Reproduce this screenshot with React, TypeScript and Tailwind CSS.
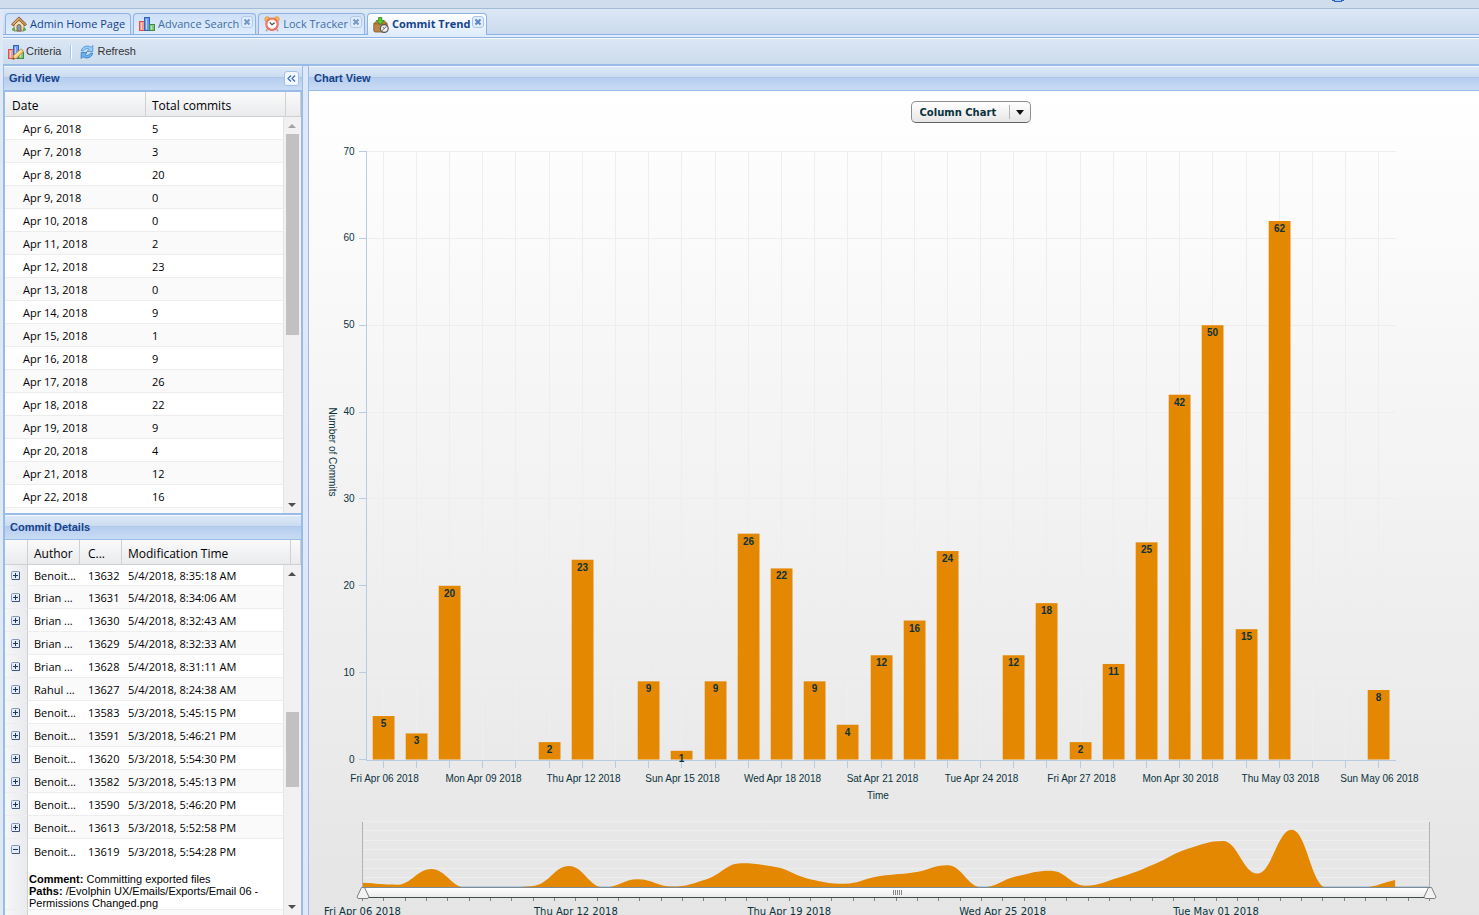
import { useState, type ReactNode } from "react";

const commits = [
  5, 3, 20, 0, 0, 2, 23, 0, 9, 1, 9, 26, 22, 9, 4, 12, 16, 24, 0, 12, 18, 2, 11, 25, 42, 50, 15, 62, 0, 0, 8,
];

const gridRows = commits.slice(0, 17).map((total, i) => ({ date: `Apr ${6 + i}, 2018`, total }));

const details = [
  ["Benoit...", "13632", "5/4/2018, 8:35:18 AM"],
  ["Brian ...", "13631", "5/4/2018, 8:34:06 AM"],
  ["Brian ...", "13630", "5/4/2018, 8:32:43 AM"],
  ["Brian ...", "13629", "5/4/2018, 8:32:33 AM"],
  ["Brian ...", "13628", "5/4/2018, 8:31:11 AM"],
  ["Rahul ...", "13627", "5/4/2018, 8:24:38 AM"],
  ["Benoit...", "13583", "5/3/2018, 5:45:15 PM"],
  ["Benoit...", "13591", "5/3/2018, 5:46:21 PM"],
  ["Benoit...", "13620", "5/3/2018, 5:54:30 PM"],
  ["Benoit...", "13582", "5/3/2018, 5:45:13 PM"],
  ["Benoit...", "13590", "5/3/2018, 5:46:20 PM"],
  ["Benoit...", "13613", "5/3/2018, 5:52:58 PM"],
];

const dayLabels = [
  "Fri Apr 06 2018",
  "Mon Apr 09 2018",
  "Thu Apr 12 2018",
  "Sun Apr 15 2018",
  "Wed Apr 18 2018",
  "Sat Apr 21 2018",
  "Tue Apr 24 2018",
  "Fri Apr 27 2018",
  "Mon Apr 30 2018",
  "Thu May 03 2018",
  "Sun May 06 2018",
];

const rangeLabels = ["Fri Apr 06 2018", "Thu Apr 12 2018", "Thu Apr 19 2018", "Wed Apr 25 2018", "Tue May 01 2018"];

/* ---------- icons ---------- */

function HomeIcon() {
  return (
    <svg width="16" height="16" viewBox="0 0 16 16" aria-hidden="true" className="shrink-0">
      <path d="M3 8v7h10V8L8 3z" fill="#f3dfb4" stroke="#8b7346" strokeWidth=".8" />
      <path d="M6 15v-4.500a2 2 0 0 1 4 0V15z" fill="#8a9bb0" stroke="#6b5a3c" strokeWidth=".8" />
      <path d="M8 .9 15.500 8.200l-1.500 1.600L8 4.200 2 9.800.5 8.200z" fill="#c8955a" stroke="#8a5527" strokeWidth=".9" />
      <path d="M8 2.300 2 8.200" stroke="#ecc893" strokeWidth=".8" />
      <path d="M1 14.500c0-2 1-3 2.200-2.500.9.400 1.100 1.500 1 2.800zM15 14.500c0-2-1-3-2.200-2.500-.9.400-1.100 1.500-1 2.800z" fill="#5aa544" />
    </svg>
  );
}

function Bars() {
  return (
    <>
      <rect x=".5" y="5.500" width="5" height="9" fill="#f79a94" stroke="#e0504a" />
      <path d="M2.500 7v6.500" stroke="#ffd2ce" />
      <rect x="5.500" y="1.500" width="5" height="13" fill="#6a9def" stroke="#2f62b8" />
      <path d="M7.500 3v10.500" stroke="#b4d0fb" />
      <rect x="10.500" y="8.500" width="5" height="6" fill="#86c67f" stroke="#3f8c42" />
      <path d="M12.500 10v3.500" stroke="#c0e8ba" />
    </>
  );
}

function ChartIcon() {
  return (
    <svg width="16" height="16" viewBox="0 0 16 16" aria-hidden="true" className="shrink-0">
      <Bars />
    </svg>
  );
}

function ChartEditIcon() {
  return (
    <svg width="16" height="16" viewBox="0 0 16 16" aria-hidden="true" className="shrink-0">
      <Bars />
      <path d="m4.700 15.400.8-3.800L12.300 5.400c1.200-.9 3.600 1.400 2.700 2.500L8.300 14.400z" fill="#f6cf7c" stroke="#c08a34" strokeWidth=".9" />
      <path d="m6.800 12.200 6.200-5.700" stroke="#fff3c8" strokeWidth="1" />
      <path d="m4.700 15.400.5-2.200 1.600 1.500z" fill="#5b3d14" />
    </svg>
  );
}

function ClockIcon() {
  return (
    <svg width="16" height="16" viewBox="0 0 16 16" aria-hidden="true" className="shrink-0">
      <path d="m3.500 13-1.500 2.300M12.500 13l1.500 2.300" stroke="#b9a7a2" strokeWidth="1.600" />
      <circle cx="3.300" cy="3.200" r="2.500" fill="#f8c05c" stroke="#e0902f" strokeWidth=".8" />
      <circle cx="12.700" cy="3.200" r="2.500" fill="#f8c05c" stroke="#e0902f" strokeWidth=".8" />
      <circle cx="8" cy="8.300" r="5.700" fill="#fbfbf8" stroke="#e8594b" strokeWidth="2" />
      <circle cx="8" cy="8.300" r="5.700" fill="none" stroke="#f59a8c" strokeWidth=".7" />
      <path d="m5.800 6.300 2.200 2.400 2.600-2" fill="none" stroke="#454545" strokeWidth="1.100" />
    </svg>
  );
}

function CommitIcon() {
  return (
    <svg width="16" height="16" viewBox="0 0 16 16" aria-hidden="true" className="shrink-0">
      <path d="m.8 6.500 3-2.300h8l2.400 2.300v6.300L10.500 15H1.800l-1-1z" fill="#b98446" stroke="#8a6130" strokeWidth=".9" />
      <path d="m1 6.700 8.500.5 4.500-.6M9.500 7.200V15" fill="none" stroke="#8a5c29" strokeWidth=".8" />
      <path d="M5.600.5h3.200v3h2.300L7.200 7.600 3.300 3.500h2.300z" fill="#5cc832" stroke="#2c8618" strokeWidth=".8" />
      <circle cx="11.300" cy="11.500" r="3.900" fill="#efefef" stroke="#555" strokeWidth="1.200" />
      <path d="m9 13.700 4.600-4.500M11.200 11.500 9.900 10" stroke="#5a5a5a" strokeWidth=".9" />
    </svg>
  );
}

function RefreshIcon() {
  return (
    <svg width="16" height="16" viewBox="0 0 16 16" aria-hidden="true" className="shrink-0">
      <path d="M2.200 6.800C3 2.800 8.300.5 12 3.300L13.800 1.500v6H7.900l2.200-2.200C8 4 5.700 4.600 4.500 6.900z" fill="#9bcdf8" stroke="#3f8bd2" strokeWidth=".8" />
      <path d="M13.800 9.200c-.8 4-6.100 6.300-9.800 3.500l-1.800 1.800v-6h5.900l-2.200 2.200c2.100 1.300 4.400.7 5.600-1.600z" fill="#6db2ee" stroke="#2f78c4" strokeWidth=".8" />
    </svg>
  );
}

function Expander({ open = false }: { open?: boolean }) {
  return (
    <button type="button" aria-label={open ? "Collapse row" : "Expand row"} className="block">
      <svg width="9" height="9" viewBox="0 0 9 9" aria-hidden="true">
        <rect x=".5" y=".5" width="8" height="8" rx="1" fill="#e4ebf5" stroke="#8297b5" />
        <path d="M8.500 1v7.500H1" fill="none" stroke="#3b5580" />
        <path d={open ? "M2 4.500h5" : "M2 4.500h5M4.500 2v5"} stroke="#1c3763" />
      </svg>
    </button>
  );
}

/* ---------- chrome ---------- */

function CloseButton({ label, strong }: { label: string; strong?: boolean }) {
  return (
    <button
      type="button"
      aria-label={label}
      className={`absolute top-[2px] right-[2px] flex size-[12px] items-center justify-center rounded-[3px] border border-[#a9c6ec] bg-[#e3eefb] ${strong ? "" : "opacity-80"}`}
    >
      <svg width="8" height="8" viewBox="0 0 8 8" aria-hidden="true">
        <path d="m1.500 1.500 5 5M6.500 1.500l-5 5" stroke="#5b86c0" strokeWidth="2" />
      </svg>
    </button>
  );
}

type TabProps = { icon: ReactNode; label: string; tone: string; closable?: boolean; active?: boolean };

function Tab({ icon, label, tone, closable, active }: TabProps) {
  return (
    <div
      className={`relative flex rounded-t-[4px] border border-b-0 border-[#8db2e3] pl-[5px] ${
        active ? "-mb-px h-[22px] bg-linear-to-b from-white to-[#deecfd]" : "h-[21px] bg-linear-to-b from-[#cfe0f7] to-[#deecfd]"
      } ${closable ? "pr-[16px]" : "pr-[5px]"}`}
    >
      <button type="button" role="tab" aria-selected={!!active} className={`flex items-center gap-[3px] whitespace-nowrap ${tone}`}>
        {icon}
        {label}
      </button>
      {closable && <CloseButton label={`Close ${label}`} strong={active} />}
    </div>
  );
}

function PanelHeader({ title, children }: { title: string; children?: ReactNode }) {
  return (
    <div className="flex h-[25px] shrink-0 items-center justify-between border-t border-b border-t-[#f4f8fd] border-b-[#99bbe8] bg-[linear-gradient(#dce8f6_0,#cbdcf1_10px,#aac3e6_10px,#b6cdef_11px,#c9dcf4_100%)] px-[5px]">
      <h2 className="text-[11px] font-bold text-[#15428b]">{title}</h2>
      {children}
    </div>
  );
}

function Scrollbar({ dimTop, children }: { dimTop?: boolean; children: ReactNode }) {
  return (
    <div className="absolute top-[25px] right-0 bottom-0 flex w-[18px] flex-col items-center border-l border-[#e4e4e4] bg-[#f1f1f1] pr-px">
      <svg width="16" height="17" viewBox="0 0 16 17" aria-hidden="true" className="shrink-0">
        <path d="M4 11h8L8 7z" fill={dimTop ? "#a3a3a3" : "#4d4d4d"} />
      </svg>
      <div className="flex w-[13px] flex-1 flex-col">{children}</div>
      <svg width="16" height="17" viewBox="0 0 16 17" aria-hidden="true" className="shrink-0">
        <path d="M4 7h8l-4 4z" fill="#4d4d4d" />
      </svg>
    </div>
  );
}

const th =
  "h-[25px] border-r border-b border-[#d0d0d0] bg-linear-to-b from-[#fafafa] to-[#e9ebed] pt-[4px] text-left text-[12px] leading-[16px] font-normal text-black";
const td = "border-b border-[#ededed] pt-[2px] leading-[16px] whitespace-nowrap";
const sideCell = "border-r border-[#d0d0d0] bg-linear-to-r from-[#f7f7f7] to-[#e8eaee] pl-[6px]";

function GridView() {
  return (
    <div className="relative h-[421px] shrink-0 overflow-hidden bg-white">
      <table className="w-full table-fixed border-separate border-spacing-0 font-['Open_Sans','Noto_Sans',sans-serif] text-[11px] text-black">
        <colgroup>
          <col className="w-[141px]" />
          <col />
          <col className="w-[15px]" />
        </colgroup>
        <thead>
          <tr>
            <th className={`${th} pl-[7px]`}>Date</th>
            <th className={`${th} pl-[6px]`}>Total commits</th>
            <th className={th} aria-label="Menu" />
          </tr>
        </thead>
        <tbody>
          {gridRows.map((row, i) => (
            <tr key={row.date} className={i % 2 ? "bg-[#fafafa]" : "bg-white"}>
              <td className={`${td} h-[23px] pl-[18px]`}>{row.date}</td>
              <td className={`${td} pl-[6px]`}>{row.total}</td>
              <td />
            </tr>
          ))}
          <tr className="bg-[#fafafa]">
            <td colSpan={3} className="h-[23px]" />
          </tr>
        </tbody>
      </table>
      <Scrollbar dimTop>
        <div className="h-[201px] bg-[#c1c1c1]" />
      </Scrollbar>
    </div>
  );
}

function CommitDetails() {
  return (
    <div className="relative min-h-0 flex-1 overflow-hidden bg-white">
      <table className="w-full table-fixed border-separate border-spacing-0 font-['Open_Sans','Noto_Sans',sans-serif] text-[11px] text-black">
        <colgroup>
          <col className="w-[23px]" />
          <col className="w-[52px]" />
          <col className="w-[42px]" />
          <col />
          <col className="w-[10px]" />
        </colgroup>
        <thead>
          <tr>
            <th className={th} aria-label="Expand" />
            <th className={`${th} pl-[6px]`}>Author</th>
            <th className={`${th} pl-[8px]`}>C...</th>
            <th className={`${th} pl-[6px]`}>Modification Time</th>
            <th className={th} aria-label="Menu" />
          </tr>
        </thead>
        <tbody>
          {details.map(([author, id, time], i) => (
            <tr key={id} className={i % 2 ? "bg-[#fafafa]" : "bg-white"}>
              <td className={`${sideCell} border-b border-b-[#ededed] ${i ? "h-[23px]" : "h-[21px]"}`}>
                <Expander />
              </td>
              <td className={`${td} pl-[6px]`}>{author}</td>
              <td className={`${td} pl-[8px]`}>{id}</td>
              <td className={`${td} pl-[6px]`}>{time}</td>
              <td />
            </tr>
          ))}
          <tr>
            <td rowSpan={2} className={`${sideCell} border-b border-b-[#ededed] pt-[6px] align-top`}>
              <Expander open />
            </td>
            <td className="h-[23px] pt-[2px] pl-[6px] leading-[16px] whitespace-nowrap">Benoit...</td>
            <td className="pt-[2px] pl-[8px] leading-[16px] whitespace-nowrap">13619</td>
            <td className="pt-[2px] pl-[6px] leading-[16px] whitespace-nowrap">5/3/2018, 5:54:28 PM</td>
            <td />
          </tr>
          <tr>
            <td colSpan={4} className="border-b border-[#ededed] pt-[11px] pr-[20px] pl-px font-['Liberation_Sans',Arial,sans-serif] leading-[12px]">
              <p>
                <b>Comment:</b> Committing exported files
              </p>
              <p>
                <b>Paths:</b> /Evolphin UX/Emails/Exports/Email 06 - Permissions Changed.png
              </p>
            </td>
          </tr>
          <tr>
            <td className={`${sideCell} h-[23px]`} />
            <td colSpan={4} className="bg-[#fafafa]" />
          </tr>
        </tbody>
      </table>
      <Scrollbar>
        <div className="flex-[130]" />
        <div className="flex-[76] bg-[#c1c1c1]" />
        <div className="flex-[111]" />
      </Scrollbar>
    </div>
  );
}

/* ---------- charts ---------- */

const plot = { left: 57.5, right: 1086.5, top: 28.5, bottom: 636.5 };
const slot = (plot.right - plot.left) / commits.length;
const yOf = (v: number) => plot.bottom - (v * (plot.bottom - plot.top)) / 70;
const xOf = (i: number) => Math.floor(plot.left + slot * (i + 0.5)) + 0.5;

function ColumnChart() {
  return (
    <svg
      viewBox="0 0 1170 690"
      className="block h-auto w-full font-['Liberation_Sans',Arial,sans-serif]"
      role="img"
      aria-label="Number of commits per day"
      fill="#0b333c"
      fontSize="10"
    >
      <g stroke="#eeeeee" shapeRendering="crispEdges">
        {commits.map((_, i) => (
          <path key={i} d={`M${xOf(i)} ${plot.top}V${plot.bottom}`} />
        ))}
        {[10, 20, 30, 40, 50, 60, 70].map((v) => (
          <path key={v} d={`M${plot.left} ${yOf(v)}H${plot.right}`} />
        ))}
      </g>
      {commits.map((v, i) =>
        v > 0 ? <rect key={i} x={xOf(i) - 10.8} y={yOf(v)} width="21.800" height={plot.bottom - yOf(v)} fill="#e48701" /> : null,
      )}
      <g stroke="#b7cce1" shapeRendering="crispEdges">
        <path d={`M${plot.left} ${plot.top}V637.5H${plot.right}`} fill="none" />
        {[0, 10, 20, 30, 40, 50, 60, 70].map((v) => (
          <path key={v} d={`M50 ${yOf(v)}h7.500`} />
        ))}
        {commits.map((_, i) => (
          <path key={i} d={`M${xOf(i)} 638v6.500`} />
        ))}
      </g>
      {commits.map((v, i) =>
        v > 0 ? (
          <text key={i} x={xOf(i)} y={yOf(v) + 11} textAnchor="middle" fontWeight="bold">
            {v}
          </text>
        ) : null,
      )}
      {[0, 10, 20, 30, 40, 50, 60, 70].map((v) => (
        <text key={v} x="45.500" y={yOf(v) + 3} textAnchor="end">
          {v}
        </text>
      ))}
      {dayLabels.map((label, i) => (
        <text key={label} x={xOf(i * 3) + 1} y="659" textAnchor="middle">
          {label}
        </text>
      ))}
      <text x="569" y="676" textAnchor="middle">
        Time
      </text>
      <text transform="translate(20 329) rotate(90)" textAnchor="middle">
        Number of Commits
      </text>
    </svg>
  );
}

const track = { left: 53.5, right: 1120.5, base: 74.5 };
const step = (track.right - track.left) / commits.length;

/* Monotone interpolation, so the area never dips below its samples. */
function areaPath() {
  const pts = commits.map((v, i) => [track.left + step * i, track.base - v * 0.93]);
  const slopes = pts.slice(1).map((p, i) => (p[1] - pts[i][1]) / step);
  const tangent = (i: number) => {
    if (i === 0 || i === pts.length - 1) return slopes[Math.min(i, slopes.length - 1)];
    const a = slopes[i - 1];
    const b = slopes[i];
    return a * b <= 0 ? 0 : (2 * a * b) / (a + b);
  };
  const handle = step * 0.42;
  let d = `M${pts[0][0]} ${track.base}V${pts[0][1]}`;
  for (let i = 1; i < pts.length; i++) {
    const [x0, y0] = pts[i - 1];
    const [x1, y1] = pts[i];
    d += `C${x0 + handle} ${y0 + tangent(i - 1) * handle} ${x1 - handle} ${y1 - tangent(i) * handle} ${x1} ${y1}`;
  }
  return `${d}V${track.base}Z`;
}

function RangeScroller() {
  const [from, setFrom] = useState(0);
  const [to, setTo] = useState(50);
  const at = (n: number) => track.left + ((track.right - track.left) * n) / 50;
  const input = "absolute top-[72%] left-[4%] h-[14px] w-[92%] opacity-0";
  return (
    <div className="relative">
      <svg
        viewBox="0 0 1170 102"
        className="block h-auto w-full overflow-visible font-['DejaVu_Sans',Verdana,sans-serif]"
        role="img"
        aria-label="Commit range overview"
      >
        <defs>
          <linearGradient id="track" x1="0" y1="0" x2="0" y2="1">
            <stop offset="0" stopColor="#ffffff" />
            <stop offset="1" stopColor="#ebebeb" />
          </linearGradient>
        </defs>
        <g stroke="#eeeeee" shapeRendering="crispEdges">
          {[8.5, 17.5, 27.5, 36.5, 46.5, 55.5, 64.5].map((y) => (
            <path key={y} d={`M54 ${y}H1120`} />
          ))}
        </g>
        <path d="M54 73.500H1120" stroke="#b7cce1" shapeRendering="crispEdges" />
        <path d={areaPath()} fill="#e48701" />
        <rect x="54" y="75" width="1066" height="9" fill="url(#track)" />
        <path d="M54 74.500H1120" stroke="#7f8b93" shapeRendering="crispEdges" />
        <path d="M53.500 9v66M1120.500 9v66" stroke="#b0b3b5" shapeRendering="crispEdges" />
        <path d="M54 84.500H1120" stroke="#444b4d" shapeRendering="crispEdges" />
        <g stroke="#7d8284" shapeRendering="crispEdges">
          {Array.from({ length: 51 }, (_, n) => (
            <path key={n} d={`M${at(n)} 85v3`} />
          ))}
        </g>
        <path d="M584.500 77v5M586.500 77v5M588.500 77v5M590.500 77v5M592.500 77v5" stroke="#85898b" shapeRendering="crispEdges" />
        {[from, to].map((n, i) => (
          <path
            key={i}
            transform={`translate(${at(n) + 0.5} 74.500)`}
            d="M-1.500 0h3L6 9.500 5 11H-5L-6 9.500z"
            fill="#f2f2f2"
            stroke="#7c8082"
            strokeLinejoin="round"
          />
        ))}
        {rangeLabels.map((label, i) => (
          <text key={label} x={53.5 + i * 213.4} y="102" textAnchor="middle" fill="#0b333c" fontSize="10">
            {label}
          </text>
        ))}
      </svg>
      <input type="range" aria-label="Range start" min="0" max="50" value={from} onChange={(e) => setFrom(Math.min(+e.target.value, to))} className={input} />
      <input type="range" aria-label="Range end" min="0" max="50" value={to} onChange={(e) => setTo(Math.max(+e.target.value, from))} className={input} />
    </div>
  );
}

export default function App() {
  return (
    <div className="flex h-screen flex-col overflow-hidden bg-[#dfe8f6] font-['Liberation_Sans',Arial,sans-serif] text-[11px]">
      <header className="flex h-[9px] shrink-0 justify-end overflow-hidden border-b border-[#a5bcd8] bg-[#cfddec] pr-[135px]">
        <svg width="12" height="3" viewBox="0 0 12 3" aria-hidden="true">
          <path d="M0 0h12v1H10v1H2V1H0z" fill="#2b62c4" />
          <path d="M3 0h6v1H3z" fill="#a9c8ef" />
        </svg>
      </header>

      <div className="flex min-h-0 flex-1 flex-col pl-[3px]">
        <div className="shrink-0 border-b border-[#8db2e3] bg-[#deecfd] pb-[2px]">
          <div
            role="tablist"
            className="flex gap-[2px] border-b border-[#8db2e3] bg-linear-to-b from-[#dde8f5] to-[#cad9ed] pt-[4px] pl-[2px] font-['Open_Sans','Noto_Sans',sans-serif] text-[11px]"
          >
            <Tab icon={<HomeIcon />} label="Admin Home Page" tone="text-[#15428b]" />
            <Tab icon={<ChartIcon />} label="Advance Search" tone="text-[#416da3]" closable />
            <Tab icon={<ClockIcon />} label="Lock Tracker" tone="text-[#416da3]" closable />
            <Tab icon={<CommitIcon />} label="Commit Trend" tone="font-bold text-[#15428b]" closable active />
          </div>
        </div>

        <div className="flex h-[28px] shrink-0 items-center border-t border-b-2 border-t-[#f5f9fd] border-b-[#99bbe8] bg-linear-to-b from-[#dbe6f4] to-[#cddceb] pl-[5px] text-[#333]">
          <button type="button" className="flex items-center gap-[2px]">
            <ChartEditIcon />
            Criteria
          </button>
          <span className="mr-[7px] ml-[9px] h-[14px] w-[2px] border-r border-l border-r-white border-l-[#98c8ff]" />
          <button type="button" className="flex items-center gap-[2px]">
            <RefreshIcon />
            Refresh
          </button>
        </div>

        <main className="flex min-h-0 flex-1 gap-[5px]">
          <aside className="flex w-[300px] shrink-0 flex-col border-x border-[#99bbe8]">
            <PanelHeader title="Grid View">
              <button
                type="button"
                aria-label="Collapse panel"
                className="-mr-[2px] flex size-[15px] items-center justify-center rounded-[3px] border border-[#a3c2ea] bg-[#f3f8fe]"
              >
                <svg width="9" height="7" viewBox="0 0 9 7" aria-hidden="true">
                  <path d="M4 .5 1 3.500l3 3M8 .5 5 3.500l3 3" fill="none" stroke="#3c72b4" strokeWidth="1.300" />
                </svg>
              </button>
            </PanelHeader>
            <div className="flex min-h-0 flex-1 flex-col border border-b-0 border-[#99bbe8]">
              <GridView />
              <div className="h-[2px] shrink-0 bg-[#99bbe8]" />
              <PanelHeader title="Commit Details" />
              <CommitDetails />
            </div>
          </aside>

          <section className="flex min-w-0 flex-1 flex-col border-l border-[#99bbe8]">
            <PanelHeader title="Chart View" />
            <div className="min-h-0 flex-1 overflow-hidden bg-linear-to-b from-white to-[#e5e5e5] pt-[10px]">
              <div className="flex justify-center pl-[153px]">
                <div className="relative flex">
                  <select
                    aria-label="Chart type"
                    className="h-[22px] w-[120px] appearance-none rounded-[5px] border border-[#8d8f90] border-b-[#5f6263] bg-linear-to-b from-white to-[#e6e6e6] pl-[8px] font-['DejaVu_Sans',Verdana,sans-serif] text-[10px] font-bold text-[#0b333c]"
                  >
                    <option>Column Chart</option>
                    <option>Line Chart</option>
                  </select>
                  <svg width="22" height="22" viewBox="0 0 22 22" aria-hidden="true" className="pointer-events-none absolute top-0 right-0">
                    <path d="M.5 4v14" stroke="#b5b5b5" />
                    <path d="M7 9h8l-4 5z" fill="#111" />
                  </svg>
                </div>
              </div>
              <ColumnChart />
              <RangeScroller />
            </div>
          </section>
        </main>
      </div>
    </div>
  );
}
